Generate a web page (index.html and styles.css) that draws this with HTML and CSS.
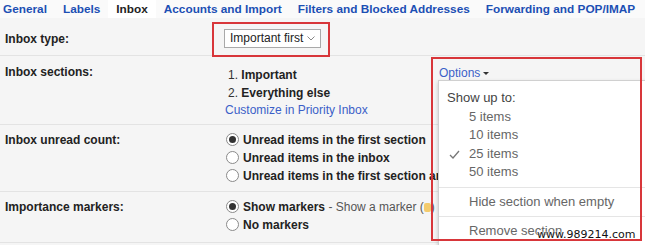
FILE: index.html
```html
<!DOCTYPE html>
<html>
<head>
<meta charset="utf-8">
<link rel="stylesheet" href="styles.css">
</head>
<body>
<div class="page">
  <div class="tabs">
    <span class="tab">General</span>
    <span class="tab">Labels</span>
    <span class="tab active">Inbox</span>
    <span class="tab">Accounts and Import</span>
    <span class="tab">Filters and Blocked Addresses</span>
    <span class="tab">Forwarding and POP/IMAP</span>
  </div>
  <div class="panel">
    <div class="row r1">
      <div class="label">Inbox type:</div>
      <div class="content">
        <div class="select"><span>Important first</span>
          <svg class="chev" width="8" height="5" viewBox="0 0 8 5"><path d="M0.5 0.5 L4 4 L7.5 0.5" fill="none" stroke="#888" stroke-width="1"/></svg>
        </div>
      </div>
    </div>
    <div class="row r2">
      <div class="label">Inbox sections:</div>
      <div class="content split">
        <div class="sections">
          <div class="line"><span class="num">1.</span> <b>Important</b></div>
          <div class="line"><span class="num">2.</span> <b>Everything else</b></div>
          <div class="line link custom">Customize in Priority Inbox</div>
        </div>
        <div class="options">
          <span class="link">Options</span><span class="caret"></span>
          <div class="menu">
            <div class="mgroup">
              <div class="mitem head">Show up to:</div>
              <div class="mitem sub">5 items</div>
              <div class="mitem sub">10 items</div>
              <div class="mitem sub checked"><svg class="check" width="11" height="9" viewBox="0 0 11 9"><path d="M1 5 L4 8 L10 1" fill="none" stroke="#777" stroke-width="1.3"/></svg>25 items</div>
              <div class="mitem sub">50 items</div>
            </div>
            <div class="mgroup">
              <div class="mitem sub">Hide section when empty</div>
            </div>
            <div class="mgroup">
              <div class="mitem sub">Remove section</div>
            </div>
          </div>
        </div>
      </div>
    </div>
    <div class="row r3">
      <div class="label">Inbox unread count:</div>
      <div class="content">
        <div class="radio on"><span class="dot"></span><b>Unread items in the first section</b></div>
        <div class="radio"><span class="dot"></span><b>Unread items in the inbox</b></div>
        <div class="radio"><span class="dot"></span><b>Unread items in the first section and the inbox</b></div>
      </div>
    </div>
    <div class="row r4">
      <div class="label">Importance markers:</div>
      <div class="content">
        <div class="radio on"><span class="dot"></span><b>Show markers</b><span class="desc"> - Show a marker (<span class="marker"></span>) by messages marked as important.</span></div>
        <div class="radio"><span class="dot"></span><b>No markers</b></div>
      </div>
    </div>
  </div>
  <div class="annot a1"></div>
  <div class="annot a2"></div>
  <div class="watermark">www.989214.com</div>
</div>
</body>
</html>
```
FILE: styles.css
```css
html, body {
  margin: 0;
  padding: 0;
}
body {
  font-family: "Liberation Sans", Arial, sans-serif;
  font-size: 12px;
  color: #222;
  background: #f5f5f5;
}
.page {
  position: relative;
  width: 645px;
  height: 245px;
  overflow: hidden;
}
.tabs {
  height: 18px;
  display: flex;
  align-items: stretch;
  background: #fafafa;
}
.tab {
  font-weight: bold;
  font-size: 11.8px;
  color: #1c4fb4;
  line-height: 18px;
  padding: 0 8px;
  white-space: nowrap;
}
.tab:first-child {
  padding-left: 3px;
}
.tab.active {
  color: #222;
  background: #fff;
}
.panel {
  background: #f5f5f5;
}
.row {
  display: grid;
  grid-template-columns: 223px 1fr;
  border-bottom: 1px solid #e3e3e3;
}
.label {
  font-weight: bold;
  padding-left: 5px;
  line-height: 16px;
  white-space: nowrap;
}
.content {
  white-space: nowrap;
}
.r1 {
  padding: 11px 0 7px;
  align-items: center;
}
.select {
  margin-left: 1px;
  width: 97px;
  height: 19px;
  box-sizing: border-box;
  border: 1px solid #a9a9a9;
  background: #fff;
  font-size: 12px;
  line-height: 17px;
  padding: 0 5px 0 5px;
  display: flex;
  align-items: center;
  justify-content: space-between;
  color: #222;
}
.r2 {
  padding: 8px 0 6px;
}
.split {
  display: flex;
  margin-top: 1px;
}
.sections {
  flex: none;
  width: 211px;
  padding-left: 5px;
  padding-top: 1px;
}
.line {
  line-height: 18px;
  height: 18px;
}
.num {
  color: #333;
}
.link {
  color: #3b5fc8;
}
.custom {
  margin-left: -3px;
  line-height: 16px;
  height: 16px;
}
.options {
  position: relative;
  line-height: 16px;
}
.caret {
  display: inline-block;
  width: 0;
  height: 0;
  border-left: 3px solid transparent;
  border-right: 3px solid transparent;
  border-top: 3px solid #333;
  margin-left: 3px;
  vertical-align: 2px;
}
.menu {
  position: absolute;
  top: 15px;
  left: -1px;
  width: 230px;
  background: #fff;
  border: 1px solid #d0d0d0;
  box-shadow: 0 2px 4px rgba(0,0,0,0.2);
  z-index: 5;
  color: #666;
  font-size: 13px;
}
.mgroup {
  padding: 4px 0 4px;
  border-bottom: 1px solid #e5e5e5;
}
.mgroup:first-child {
  padding-top: 8px;
  padding-bottom: 5px;
}
.mitem {
  line-height: 18.5px;
  height: 18.5px;
  padding-left: 30px;
  position: relative;
}
.mgroup + .mgroup .mitem {
  line-height: 20px;
  height: 20px;
}
.mitem.head {
  padding-left: 8px;
  color: #444;
}
.check {
  position: absolute;
  left: 10px;
  top: 5px;
}
.r3 {
  padding: 6px 0 6px;
}
.r4 {
  padding: 6px 0 8px;
}
.r3 .label, .r4 .label {
  line-height: 18px;
}
.radio {
  height: 18px;
  line-height: 18px;
  margin-left: 3px;
}
.dot {
  display: inline-block;
  box-sizing: border-box;
  width: 13px;
  height: 13px;
  border: 1px solid #8a8a8a;
  border-radius: 50%;
  background: #fff;
  margin-right: 4px;
  position: relative;
  vertical-align: -2px;
}
.radio.on .dot::after {
  content: "";
  position: absolute;
  left: 2px;
  top: 2px;
  width: 7px;
  height: 7px;
  border-radius: 50%;
  background: #333;
}
.desc {
  color: #555;
}
.marker {
  display: inline-block;
  width: 7px;
  height: 9px;
  background: #f3c14a;
  border-radius: 2px;
  vertical-align: -1px;
  opacity: 0.8;
}
.annot {
  position: absolute;
  border: 2px solid #d8363a;
  z-index: 10;
  box-sizing: border-box;
}
.a1 {
  left: 212px;
  top: 22px;
  width: 118px;
  height: 35px;
}
.a2 {
  left: 431px;
  top: 57px;
  width: 211px;
  height: 184px;
}
.watermark {
  position: absolute;
  left: 537px;
  top: 228px;
  font-family: "DejaVu Sans", sans-serif;
  font-size: 11px;
  color: #111;
  z-index: 11;
  text-shadow: 0 0 2px #fff, 0 0 2px #fff;
}
```
